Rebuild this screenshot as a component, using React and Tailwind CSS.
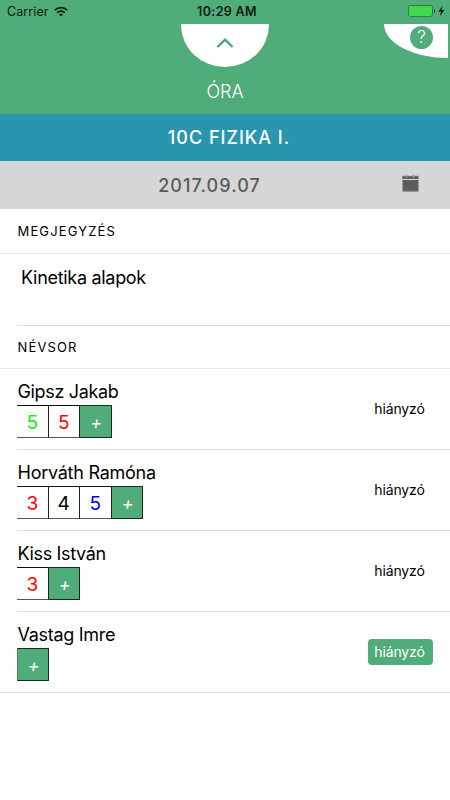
const GRADE_COLORS = {
  green: 'text-[#00f900]',
  red: 'text-[#ff0000]',
  blue: 'text-[#0000ff]',
  black: 'text-black',
};

const students = [
  { name: 'Gipsz Jakab', tracking: 'tracking-[-0.35px]', grades: [[5, 'green'], [5, 'red']], absent: false },
  { name: 'Horváth Ramóna', tracking: 'tracking-[-0.25px]', grades: [[3, 'red'], [4, 'black'], [5, 'blue']], absent: false },
  { name: 'Kiss István', tracking: 'tracking-[-0.35px]', grades: [[3, 'red']], absent: false },
  { name: 'Vastag Imre', tracking: 'tracking-[-0.3px]', grades: [], absent: true },
];

function StatusBar() {
  return (
    <div className="grid grid-cols-3 items-center h-6 pl-[7px] pr-[5px] text-[12.5px] text-[#0b1a12]">
      <div className="flex items-center gap-[5px]">
        <span className="tracking-[0.1px]">Carrier</span>
        <svg className="w-[14px] h-[11px] -mt-[2px]" viewBox="0 0 14 11" fill="none" stroke="currentColor" strokeWidth="1.7">
          <path d="M0.8 4.1C4.2 0.7 9.8 0.7 13.2 4.1" />
          <path d="M3.2 6.6C5.3 4.6 8.7 4.6 10.8 6.6" />
          <path d="M7 10.4L4.9 8.3C6.1 7.2 7.9 7.2 9.1 8.3Z" fill="currentColor" stroke="none" />
        </svg>
      </div>
      <span className="pl-[2px] text-center font-semibold tracking-[0.35px] whitespace-nowrap">10:29 AM</span>
      <div className="flex items-center justify-end">
        <svg className="w-[37px] h-3 -mt-[2px]" viewBox="0 0 37 12">
          <rect x="0.5" y="0.5" width="24" height="11" rx="2" fill="#42d74f" stroke="#297d45" />
          <path d="M26 4.2C27.5 4.6 27.5 7.4 26 7.8Z" fill="#10251a" />
          <path d="M34.4 0.8L30.4 6.8H33L31.8 11.2L36.4 5.1H33.5Z" fill="#0b1a12" />
        </svg>
      </div>
    </div>
  );
}

function Header() {
  return (
    <header className="relative h-[114px] bg-[#50ac79]">
      <StatusBar />
      <div className="mx-auto flex justify-center w-[88px] h-[42.5px] bg-white rounded-b-[44px_42px]">
        <svg className="mt-[13px] w-[18px] h-[12px]" viewBox="0 0 18 12" fill="none" stroke="#43a872" strokeWidth="2.3">
          <path d="M1.4 10L9 2.6L16.6 10" />
        </svg>
      </div>
      <button className="absolute top-6 right-[2px] w-[64px] h-[34px] bg-white rounded-bl-[64px_34px]">
        <span className="absolute left-[26px] top-[2px] flex items-center justify-center w-[23px] h-[23px] rounded-full bg-[#50ac79] text-[17px] font-light text-white">
          ?
        </span>
      </button>
      <h1 className="mt-[11.5px] text-center text-[18px] leading-[27px] font-light text-white">ÓRA</h1>
    </header>
  );
}

function CalendarIcon() {
  return (
    <svg className="w-[17px] h-[18px] -mt-[4px]" viewBox="0 0 17 18">
      <rect x="0.5" y="2" width="16" height="15.5" fill="#5c5c5c" />
      <path d="M0.5 5.5H16.5" stroke="#d7d7d7" strokeWidth="1" />
      <path d="M4.5 0.3V4.3M11.5 0.3V4.3" stroke="#a5a5a5" strokeWidth="1.1" />
      <path d="M0.5 2.2H16.5M0.5 17H16.5" stroke="#888" strokeWidth="0.8" />
    </svg>
  );
}

function SectionTitle({ children, className }) {
  return (
    <div className={`pl-[17.5px] flex items-center border-b border-[#e6e6e6] text-[13px] text-black ${className}`}>
      {children}
    </div>
  );
}

function StudentRow({ student, last }) {
  return (
    <li className={last ? 'border-b border-[#dedede]' : ''}>
      <div className={`flex justify-between ml-[17px] pr-[17.5px] ${last ? 'h-[80px]' : 'h-[81px] border-b border-[#dedede]'}`}>
        <div className="pt-[10px]">
          <div className={`pl-[0.5px] text-[18px] leading-[26px] text-black whitespace-nowrap ${student.tracking}`}>{student.name}</div>
          <div className="flex">
            {student.grades.map(([grade, color], i) => (
              <div
                key={i}
                className={`flex items-center justify-center w-[31.5px] h-[32.5px] pt-[3px] border-y border-r border-t-[#111] border-r-[#222] border-b-[#555] text-[19px] ${GRADE_COLORS[color]}`}
              >
                {grade}
              </div>
            ))}
            <button className={`flex items-center justify-center w-[31.5px] h-[32.5px] pt-[2px] pl-[2px] border-y border-r border-[#162d20] bg-[#50ac79] text-[18px] italic text-white ${student.grades.length ? '' : 'border-l border-l-[#50806a]'}`}>
              +
            </button>
          </div>
        </div>
        <button
          className={`mt-[27px] w-[65px] h-[26px] pb-px pr-px rounded-[4px] text-[14px] tracking-[-0.15px] ${student.absent ? 'bg-[#50ac79] text-white' : 'text-black'}`}
        >
          hiányzó
        </button>
      </div>
    </li>
  );
}

export default function App() {
  return (
    <div className="w-[450px] h-[800px] overflow-hidden bg-white font-['Inter','Liberation_Sans',sans-serif]">
      <Header />
      <div className="flex items-center justify-center h-[47px] pl-[8px] bg-[#2796ae] text-[18px] font-medium tracking-[1px] text-white">
        10C FIZIKA I.
      </div>
      <div className="flex items-center h-[48px] bg-[#d6d6d6] pr-[31px]">
        <span className="flex-1 pl-[17px] text-center text-[18px] font-medium tracking-[1.05px] text-[#5a5a5a]">2017.09.07</span>
        <CalendarIcon />
      </div>
      <SectionTitle className="h-[45px] pt-px tracking-[1.15px]">MEGJEGYZÉS</SectionTitle>
      <div className="ml-[17px] pl-[4px] pt-[10px] h-[72px] border-b border-[#dedede] text-[18px] leading-[27px] tracking-[-0.3px] text-black">
        Kinetika alapok
      </div>
      <SectionTitle className="h-[43px] pt-[2px] tracking-[1.15px]">NÉVSOR</SectionTitle>
      <ul>
        {students.map((student, i) => (
          <StudentRow key={student.name} student={student} last={i === students.length - 1} />
        ))}
      </ul>
    </div>
  );
}
